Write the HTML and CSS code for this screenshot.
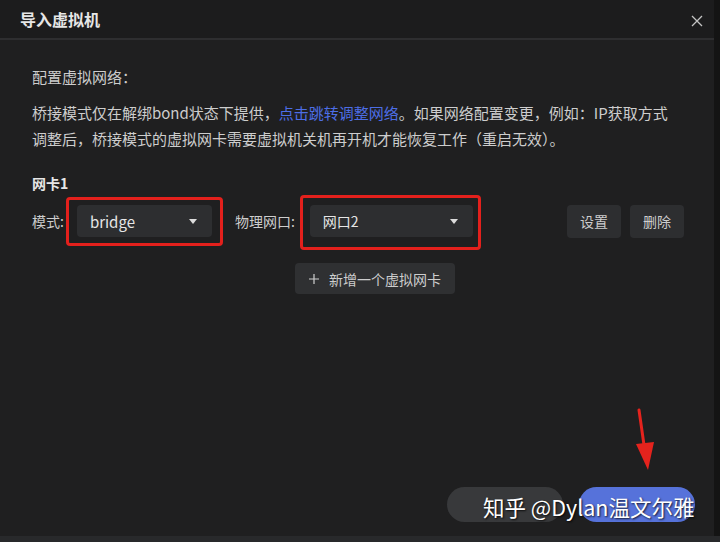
FILE: index.html
```html
<!DOCTYPE html>
<html lang="zh-CN">
  <head>
    <meta charset="UTF-8" />
    <meta name="viewport" content="width=device-width, initial-scale=1.0" />
    <title>导入虚拟机</title>
    <link rel="stylesheet" href="styles.css">
  </head>
  <body>
    <div class="dialog">
      <header class="dialog-header">
        <h1>导入虚拟机</h1>
        <button class="close" aria-label="关闭">
          <svg width="12" height="12" viewBox="0 0 12 12">
            <path d="M1 1L11 11M11 1L1 11" stroke="#c4c4c4" stroke-width="1.3" fill="none" />
          </svg>
        </button>
      </header>

      <div class="dialog-body">
        <p class="section-title">配置虚拟网络：</p>
        <p class="desc">
          桥接模式仅在解绑bond状态下提供，<a href="#" class="link">点击跳转调整网络</a>。如果网络配置变更，例如：IP获取方式<br />调整后，桥接模式的虚拟网卡需要虚拟机关机再开机才能恢复工作（重启无效）。
        </p>

        <h2 class="nic-title">网卡1</h2>

        <div class="nic-row">
          <span class="field-label">模式:</span>
          <div class="mark mark-mode">
            <div class="select select-mode">
              <span>bridge</span>
              <span class="caret"></span>
            </div>
          </div>
          <span class="field-label label-port">物理网口:</span>
          <div class="mark mark-port">
            <div class="select select-port">
              <span>网口2</span>
              <span class="caret"></span>
            </div>
          </div>
          <div class="row-actions">
            <button class="btn">设置</button>
            <button class="btn">删除</button>
          </div>
        </div>

        <button class="btn btn-add">
          <svg width="10" height="10" viewBox="0 0 10 10">
            <path d="M5 0V10M0 5H10" stroke="#cfcfcf" stroke-width="1.2" fill="none" />
          </svg>
          <span>新增一个虚拟网卡</span>
        </button>
      </div>

      <footer class="dialog-footer">
        <button class="pill pill-cancel"></button>
        <button class="pill pill-ok"></button>
      </footer>

      <svg class="arrow" width="30" height="66" viewBox="0 0 30 66">
        <path d="M11 2L17 44" stroke="#e5231d" stroke-width="3" fill="none" stroke-linecap="round" />
        <path d="M8 36L26 34L20 62Z" fill="#e5231d" />
      </svg>

      <div class="watermark">知乎 @Dylan温文尔雅</div>
    </div>
    <div class="bottom-strip"></div>
  </body>
</html>
```

FILE: styles.css
```css
:root {
  --bg: #1f1f20;
  --header-bg: #1c1c1d;
  --line: #2e2e30;
  --text: #cdcdcd;
  --text-strong: #e6e6e6;
  --control: #2d2e30;
  --link: #4d6ee6;
  --mark: #e3201c;
  --blue: #5672da;
}

* {
  margin: 0;
  padding: 0;
  box-sizing: border-box;
  font-family: "Noto Sans CJK SC", "Noto Sans", sans-serif;
}

body {
  width: 720px;
  height: 542px;
  background-color: #141414;
  overflow: hidden;
}

.dialog {
  position: relative;
  width: 714px;
  height: 536px;
  background-color: var(--bg);
  display: flex;
  flex-direction: column;
}

.dialog-header {
  height: 40px;
  background-color: var(--header-bg);
  border-bottom: 2px solid var(--line);
  display: flex;
  align-items: center;
  justify-content: space-between;
  padding: 0 10px 0 20px;
}

h1 {
  font-size: 16px;
  font-weight: 700;
  color: var(--text-strong);
  line-height: 20px;
  margin-top: -1px;
}

.close {
  background: none;
  border: none;
  width: 14px;
  height: 14px;
  display: flex;
  align-items: center;
  justify-content: center;
  margin-top: 4px;
}

.dialog-body {
  padding: 24px 30px 0 32px;
  color: var(--text);
  font-size: 15px;
}

.section-title {
  line-height: 26px;
}

.desc {
  margin-top: 10px;
  line-height: 26px;
}

.link {
  color: var(--link);
  text-decoration: none;
}

.nic-title {
  margin-top: 21px;
  font-size: 14px;
  font-weight: 700;
  line-height: 20px;
  color: var(--text-strong);
}

.nic-row {
  margin-top: 4px;
  height: 48px;
  display: flex;
  align-items: center;
}

.field-label {
  font-size: 14px;
  line-height: 20px;
  white-space: nowrap;
}

.mark {
  align-self: flex-start;
  border: 3px solid var(--mark);
  border-radius: 4px;
}

.mark-mode {
  margin-left: 2px;
  padding: 5px 8px 6px 8px;
}

.label-port {
  margin-left: 12px;
}

.mark-port {
  margin-top: -2px;
  margin-left: 5px;
  padding: 7px 5px 10px 7px;
}

.select {
  height: 32px;
  background-color: var(--control);
  border-radius: 4px;
  display: flex;
  align-items: center;
  justify-content: space-between;
  padding: 0 15px 0 13px;
  font-size: 15px;
  color: var(--text-strong);
}

.select-mode {
  width: 135px;
}

.select-port {
  width: 163px;
  font-size: 14px;
}

.caret {
  width: 0;
  height: 0;
  border-left: 4.5px solid transparent;
  border-right: 4.5px solid transparent;
  border-top: 5px solid #dcdcdc;
}

.row-actions {
  margin-left: auto;
  display: flex;
  gap: 9px;
}

.btn {
  height: 33px;
  padding: 0 13px;
  background-color: var(--control);
  border: none;
  border-radius: 4px;
  color: var(--text);
  font-size: 14px;
  white-space: nowrap;
}

.btn-add {
  margin-top: 18px;
  margin-left: 263px;
  height: 31px;
  display: flex;
  align-items: center;
  gap: 10px;
  padding: 0 14px;
  background-color: #2f3032;
}

.dialog-footer {
  margin-top: auto;
  display: flex;
  justify-content: flex-end;
  gap: 16px;
  padding: 0 19px 14px 0;
}

.pill {
  width: 116px;
  height: 35px;
  border: none;
  border-radius: 18px;
}

.pill-cancel {
  background-color: #38393b;
}

.pill-ok {
  background-color: var(--blue);
}

.arrow {
  position: absolute;
  left: 628px;
  top: 408px;
}

.watermark {
  position: absolute;
  left: 483px;
  top: 492px;
  font-size: 21.5px;
  line-height: 30px;
  color: #ffffff;
  white-space: nowrap;
  text-shadow: 1px 1px 2px rgba(0, 0, 0, 0.8);
}

.bottom-strip {
  height: 6px;
  width: 720px;
  background-color: #28292b;
}
```
